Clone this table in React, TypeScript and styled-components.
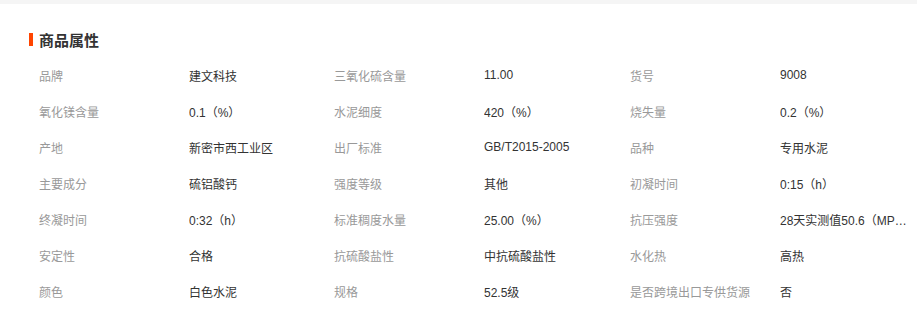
import React from "react";
import styled, { createGlobalStyle } from "styled-components";

const GlobalStyle = createGlobalStyle`
  body {
    margin: 0;
    background: #fff;
    font-family: "Liberation Sans", "Noto Sans CJK SC", sans-serif;
  }
`;

const TopBand = styled.div`
  height: 4px;
  background-color: #f5f5f5;
`;

const Section = styled.section`
  padding: 26px 0 0 29px;
`;

const Title = styled.h3`
  display: flex;
  align-items: center;
  gap: 6px;
  margin: 0 0 9px;
  height: 18px;
  font-size: 15px;
  font-weight: bold;
  color: #333;

  &::before {
    content: "";
    width: 4px;
    height: 13px;
    background-color: #ff4400;
  }
`;

const Grid = styled.dl`
  display: grid;
  grid-template-columns: 150px 145px 150px 146px 150px 130px;
  grid-auto-rows: 36px;
  align-items: center;
  margin: 0;
  padding-left: 10px;
  font-size: 12px;
`;

const Label = styled.dt`
  color: #999;
  white-space: nowrap;
`;

const Value = styled.dd`
  margin: 0;
  color: #333;
  white-space: nowrap;
  overflow: hidden;
  text-overflow: ellipsis;
`;

const attrs: [string, string][] = [
  ["品牌", "建文科技"],
  ["三氧化硫含量", "11.00"],
  ["货号", "9008"],
  ["氧化镁含量", "0.1（%）"],
  ["水泥细度", "420（%）"],
  ["烧失量", "0.2（%）"],
  ["产地", "新密市西工业区"],
  ["出厂标准", "GB/T2015-2005"],
  ["品种", "专用水泥"],
  ["主要成分", "硫铝酸钙"],
  ["强度等级", "其他"],
  ["初凝时间", "0:15（h）"],
  ["终凝时间", "0:32（h）"],
  ["标准稠度水量", "25.00（%）"],
  ["抗压强度", "28天实测值50.6（MPa）"],
  ["安定性", "合格"],
  ["抗硫酸盐性", "中抗硫酸盐性"],
  ["水化热", "高热"],
  ["颜色", "白色水泥"],
  ["规格", "52.5级"],
  ["是否跨境出口专供货源", "否"],
];

export default function App() {
  return (
    <>
      <GlobalStyle />
      <TopBand />
      <Section>
        <Title>商品属性</Title>
        <Grid>
          {attrs.map(([k, v]) => (
            <React.Fragment key={k}>
              <Label>{k}</Label>
              <Value title={v}>{v}</Value>
            </React.Fragment>
          ))}
        </Grid>
      </Section>
    </>
  );
}
